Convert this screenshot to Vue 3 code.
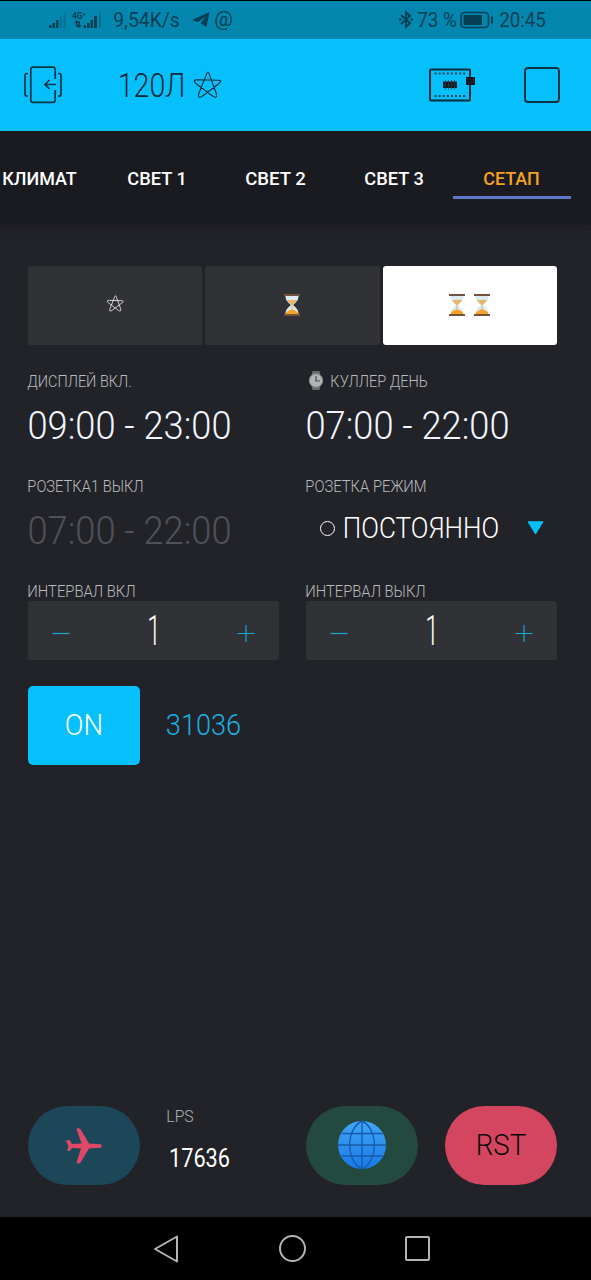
<script setup>
import { h } from 'vue'

// Single line of text set to a fixed cap height and width
const Fit = (props) => {
  const size = props.cap / 0.711
  const pad = size * 0.04
  return h('svg', { width: props.w, height: props.cap, class: 'fit' }, [
    h('text', {
      x: -pad,
      y: props.cap,
      'font-size': size,
      textLength: Number(props.w) + pad * 2,
      lengthAdjust: 'spacingAndGlyphs',
      fill: 'currentColor'
    }, props.t)
  ])
}
Fit.props = ['t', 'w', 'cap']

const Star = (props) => h('svg', { width: props.size, height: props.size, viewBox: '0 0 27 27', fill: 'none', stroke: 'currentColor', 'stroke-width': props.stroke }, [
  h('path', { d: 'M12 4.500Q14 -2 15.700 4.500L22.300 22.500Q23.500 28.500 18.500 25L2.500 13Q-2.500 8.800 4 8.800L23 9.300Q29.500 9 24.500 13L8.500 25Q3.500 28.500 4.800 22.500Z' })
])
Star.props = ['size', 'stroke']

const Hourglass = () => h('svg', { width: 18, height: 22, viewBox: '0 0 18 22' }, [
  h('path', { d: 'M2.4 1.5H15.6C15.6 7 12 9 10.2 11C12 13 15.6 15 15.6 20.5H2.4C2.4 15 6 13 7.8 11C6 9 2.4 7 2.4 1.5Z', fill: '#dce9ef' }),
  h('path', { d: 'M4 6H14C12.8 8.4 10.5 9.4 9.5 11V16H8.5V11C7.5 9.4 5.2 8.4 4 6Z', fill: '#e9b467' }),
  h('path', { d: 'M2.8 20C2.8 17.6 5.5 16.6 9 15.2C12.5 16.6 15.2 17.6 15.2 20Z', fill: '#f5a324' }),
  h('path', { d: 'M1 0H17V2H1ZM1 20H17V22H1Z', fill: '#72513f' })
])

const tabs = [
  { t: 'КЛИМАТ', w: 73 },
  { t: 'СВЕТ 1', w: 58 },
  { t: 'СВЕТ 2', w: 59 },
  { t: 'СВЕТ 3', w: 58 },
  { t: 'СЕТАП', w: 55, active: true }
]
const steppers = [
  { t: 'ИНТЕРВАЛ ВКЛ', w: 107 },
  { t: 'ИНТЕРВАЛ ВЫКЛ', w: 119 }
]
const pins = [0, 1, 2, 3, 4, 5, 6, 7]
</script>

<template>
  <div class="phone">
    <div class="status">
      <svg class="signal" width="55" height="20" viewBox="0 0 55 20">
        <g fill="#063f53">
          <path d="M1 15h2.500v3H1zM4.500 13h2.500v5h-2.500zM8 10h2.500v8H8zM26 13l2.700-3 2.700 3zM28.500 15l2.500 3 2.500-3zM35.500 15h2.500v3h-2.500zM39 13h2.500v5h-2.500zM42.500 10h2.500v8h-2.500zM46 6h3v12h-3z" />
          <path d="M28 12v5h1.400v-5zM30.400 11v5h1.400v-5z" />
        </g>
        <path d="M12 6h2v12h-2zM15.500 3h2v15h-2zM51 3h2v15h-2z" fill="#067391" />
        <text x="24" y="9" font-size="9" font-weight="700" textLength="14" lengthAdjust="spacingAndGlyphs" fill="#063f53">4G⁺</text>
      </svg>
      <Fit class="speed" t="9,54K/s" w="65" cap="14" />
      <svg class="tele" width="18" height="15" viewBox="0 0 18 15"><path d="M0 8L17.500 0L14.500 15L8.500 11L14 4L6 10Z" fill="#063f53" /></svg>
      <Fit class="at" t="@" w="17" cap="15" />
      <svg class="bt" width="14" height="19" viewBox="0 0 14 19" fill="none" stroke="#063f53" stroke-width="1.800"><path d="M2 5L11 13L7 17V2L11 6L2 14" /><path d="M0 9.500h2.500M11.500 9.500H14" /></svg>
      <Fit class="pct" t="73 %" w="38" cap="14" />
      <svg class="battery" width="34" height="18" viewBox="0 0 34 18"><rect x="1" y="1.500" width="27.500" height="15" rx="3.500" fill="none" stroke="#063f53" stroke-width="1.700" /><path d="M3.500 4H22v10H3.500zM31 5.500h2v7h-2z" fill="#063f53" /></svg>
      <Fit t="20:45" w="45" cap="14" />
    </div>

    <header class="header">
      <svg class="exit" width="38" height="38" viewBox="0 0 38 38" fill="none" stroke="#103447" stroke-width="1.700">
        <path d="M31.200 13V3.500Q31.200 1.200 29 1.200H9Q6.800 1.200 6.800 3.500V34Q6.800 36.300 9 36.300H29Q31.200 36.300 31.200 34V24" />
        <path d="M32 18.500H21M25.500 14L21 18.500L25.500 23" />
        <path d="M4 7.500H3Q1 7.500 1 9.500V28Q1 30 3 30H4M34 7.500H35Q37 7.500 37 9.500V28Q37 30 35 30H34" />
      </svg>
      <Fit class="title" t="120Л" w="65" cap="23" />
      <Star class="star-lg" size="27" stroke="1.100" />
      <svg class="board" width="46" height="34" viewBox="0 0 46 34">
        <rect x="1" y="1.500" width="40" height="31" rx="1" fill="none" stroke="#102c3b" stroke-width="2" />
        <g v-for="i in pins" :key="i" fill="#164056">
          <rect :x="5.500 + i * 4.100" y="4.500" width="2" height="2" />
          <rect :x="5.500 + i * 4.100" y="27" width="2" height="2" />
        </g>
        <rect x="14" y="13.500" width="14" height="6.500" fill="#1b1d24" />
        <path d="M16.500 12v9.500M19.500 12v9.500M22.500 12v9.500M25.500 12v9.500" stroke="#1b3a4a" stroke-width=".8" />
        <rect x="37" y="9" width="9" height="8" fill="#1b1d24" />
      </svg>
      <div class="stop"></div>
    </header>

    <nav class="tabs">
      <div v-for="tab in tabs" :key="tab.t" class="tab" :class="{ active: tab.active }">
        <Fit :t="tab.t" :w="tab.w" cap="13.5" />
      </div>
    </nav>

    <main class="body">
      <div class="segments">
        <div class="segment"><Star class="star-sm" size="16.500" stroke="1.400" /></div>
        <div class="segment"><Hourglass /></div>
        <div class="segment on"><Hourglass /><Hourglass /></div>
      </div>

      <div class="grid">
        <div class="cell">
          <Fit class="label" t="ДИСПЛЕЙ ВКЛ." w="103" cap="11.5" />
          <Fit class="time" t="09:00 - 23:00" w="201" cap="27" />
        </div>
        <div class="cell">
          <div class="label">
            <svg class="watch" width="16" height="19" viewBox="0 0 16 19">
              <path d="M4.500 0h7l1 4h-9zM3.500 15h9l-1 4h-7z" fill="#666b6e" />
              <circle cx="8" cy="9.500" r="6.700" fill="#b2b4b4" stroke="#85898b" />
              <path d="M8 5v5h4" fill="none" stroke="#44494d" stroke-width="1.200" />
            </svg>
            <Fit t="КУЛЛЕР ДЕНЬ" w="96" cap="11.5" />
          </div>
          <Fit class="time" t="07:00 - 22:00" w="201" cap="27" />
        </div>
        <div class="cell">
          <Fit class="label" t="РОЗЕТКА1 ВЫКЛ" w="115" cap="11.5" />
          <Fit class="time dim" t="07:00 - 22:00" w="201" cap="27" />
        </div>
        <div class="cell">
          <Fit class="label" t="РОЗЕТКА РЕЖИМ" w="120" cap="11.5" />
          <div class="select">
            <i class="ring"></i>
            <Fit t="ПОСТОЯННО" w="154" cap="21" />
            <svg class="caret" width="17" height="14" viewBox="0 0 17 14"><path d="M1 .8H16L8.500 13Z" fill="#05c0fa" stroke="#05c0fa" stroke-linejoin="round" /></svg>
          </div>
        </div>
        <div v-for="s in steppers" :key="s.t" class="cell">
          <Fit class="label" :t="s.t" :w="s.w" cap="11.5" />
          <div class="stepper">
            <svg width="18" height="18" viewBox="0 0 18 18"><path d="M.5 9.500h17" stroke="#15a9d6" stroke-width="1.200" /></svg>
            <Fit class="count" t="1" w="10" cap="30.5" />
            <svg width="18" height="18" viewBox="0 0 18 18"><path d="M.5 9.500h17M9 1v17" stroke="#15a9d6" stroke-width="1.200" /></svg>
          </div>
        </div>
      </div>

      <div class="power">
        <div class="button"><Fit class="lift" t="ON" w="36" cap="21" /></div>
        <Fit class="lift" t="31036" w="73" cap="21" />
      </div>

      <div class="bottom">
        <div class="pill plane">
          <svg width="37" height="36" viewBox="0 0 37 36"><path d="M11.500 0Q14 0 15 2L23 15.500L34.500 16.200Q37 18 34.500 19.800L23 20.500L14.500 34.500Q12.500 36 10.500 35L15 20.500L6 20L4 22.500Q2.500 23.500 1.300 22.500L2.500 18L0 13Q1.500 11.500 4 12.500L6 16L15.500 15.500L10.500 1Z" fill="#e0486a" /></svg>
        </div>
        <div class="lps">
          <Fit class="lps-label" t="LPS" w="26" cap="11.5" />
          <Fit class="lps-value" t="17636" w="59" cap="18" />
        </div>
        <div class="pill globe">
          <svg class="lift" width="50" height="50" viewBox="0 0 50 50">
            <defs><linearGradient id="sea" x1="0" y1="0" x2="0" y2="1"><stop offset="0" stop-color="#42a6f7" /><stop offset="1" stop-color="#1779e4" /></linearGradient></defs>
            <circle cx="25" cy="25" r="24" fill="url(#sea)" />
            <path d="M25 1V49M1 25H49M4.500 13.500H45.500M4.500 36H45.500M25 1C8.500 9 8.500 41 25 49C41.500 41 41.500 9 25 1" fill="none" stroke="#155cae" stroke-width="1.400" />
          </svg>
        </div>
        <div class="pill rst"><Fit class="lift" t="RST" w="48" cap="21" /></div>
      </div>
    </main>

    <footer class="system">
      <svg width="26" height="30" viewBox="0 0 26 30"><path d="M2 15L24 2.500V27.500Z" fill="none" stroke="#b4b4b4" stroke-width="2" stroke-linejoin="round" /></svg>
      <i class="home"></i>
      <i class="recent"></i>
    </footer>
  </div>
</template>

<style>
body { background: #000; }
</style>

<style scoped>
.phone { width: 591px; height: 1280px; display: flex; flex-direction: column; overflow: hidden; background: #222329; font-family: Roboto, "Open Sans", sans-serif; font-weight: 300; }
svg { display: block; flex: none; overflow: visible; }
.lift { margin-bottom: 2px; }
.status { box-sizing: border-box; height: 39px; border-top: 1px solid #000; background: #0487af; color: #063f53; display: flex; align-items: center; padding-left: 48px; padding-bottom: 1px; font-weight: 400; }
.speed { margin-left: 11px; }
.tele { margin-left: 13px; }
.at { margin: -2px 0 0 5px; }
.bt { margin-left: 167px; }
.pct { margin-left: 5px; }
.battery { margin-left: 4px; margin-right: 6px; }
.header { height: 92px; background: #05c0fa; display: flex; align-items: center; color: #102c3b; padding-left: 24px; }
.title { margin-left: 57px; }
.star-lg { margin-left: 10px; margin-bottom: 2px; }
.star-sm { color: #e8e8e8; margin-bottom: 2px; }
.board { margin-left: 208px; }
.stop { box-sizing: border-box; width: 36px; height: 36px; margin-left: 49px; border: 2px solid #103447; border-radius: 4px; }
.tabs { height: 94px; background: #1a1b20; display: flex; color: #fff; font-weight: 500; margin-left: -20px; box-shadow: 0 6px 6px -2px #1e1f24; }
.tab { box-sizing: border-box; flex: none; width: 118.2px; height: 67.500px; display: flex; justify-content: center; padding-top: 39.500px; border-bottom: 3.500px solid transparent; }
.active { color: #f5a21e; border-color: #6178c8; }
.body { flex: 1; display: flex; flex-direction: column; padding: 41px 34px 0 28px; }
.segments { display: grid; grid-template-columns: repeat(3, 1fr); gap: 3px; height: 79px; }
.segment { background: #313235; display: flex; align-items: center; justify-content: center; gap: 7px; border-radius: 2px; padding-bottom: 2px; box-sizing: border-box; }
.on { background: #fff; border-radius: 3px; }
.grid { display: grid; grid-template-columns: 251px 251px; column-gap: 27px; grid-auto-rows: 105px; padding-top: 29.500px; }
.cell { display: flex; flex-direction: column; align-items: flex-start; }
.label { color: #babbbd; height: 11.500px; display: flex; align-items: center; }
.watch { margin: 0 7px 0 2px; }
.time { color: #f2f7ff; margin: 26px 0 0 1px; }
.dim { color: #505257; }
.select { display: flex; align-items: center; color: #fff; margin-top: 26px; padding-left: 14px; }
.ring { box-sizing: border-box; width: 15px; height: 15px; border: 1.800px solid #fff; border-radius: 50%; margin-right: 9px; margin-top: 2px; }
.caret { margin-left: 29px; margin-top: 1px; }
.stepper { box-sizing: border-box; width: 251px; height: 59px; margin-top: 5px; padding: 5px 24px 0; background: #313235; border-radius: 3px; display: flex; justify-content: space-between; align-items: center; color: #fff; }
.count { margin-top: -7px; }
.power { display: flex; align-items: center; gap: 27px; margin-top: -3.500px; color: #18b1e2; }
.button { width: 112px; height: 79px; border-radius: 5px; background: #05c0fa; color: #fff; display: flex; align-items: center; justify-content: center; }
.bottom { display: flex; margin-top: auto; margin-bottom: 32px; height: 79px; }
.pill { width: 112px; height: 79px; border-radius: 40px; display: flex; align-items: center; justify-content: center; }
.plane { background: #1c4759; }
.globe { background: #24493f; }
.rst { background: #d4455f; color: #0b0709; margin-left: 27px; }
.lps { width: 139px; margin-left: 27px; }
.lps-label { color: #b0b1b4; margin-top: 4px; }
.lps-value { color: #fff; margin: 27px 0 0 3px; font-weight: 400; }
.system { height: 63px; background: #000; display: flex; align-items: center; padding-left: 153px; }
.home { box-sizing: border-box; width: 27px; height: 27px; border: 2px solid #b4b4b4; border-radius: 50%; margin-left: 100px; }
.recent { box-sizing: border-box; width: 25px; height: 25px; border: 2px solid #b4b4b4; border-radius: 2px; margin-left: 99px; }
</style>
